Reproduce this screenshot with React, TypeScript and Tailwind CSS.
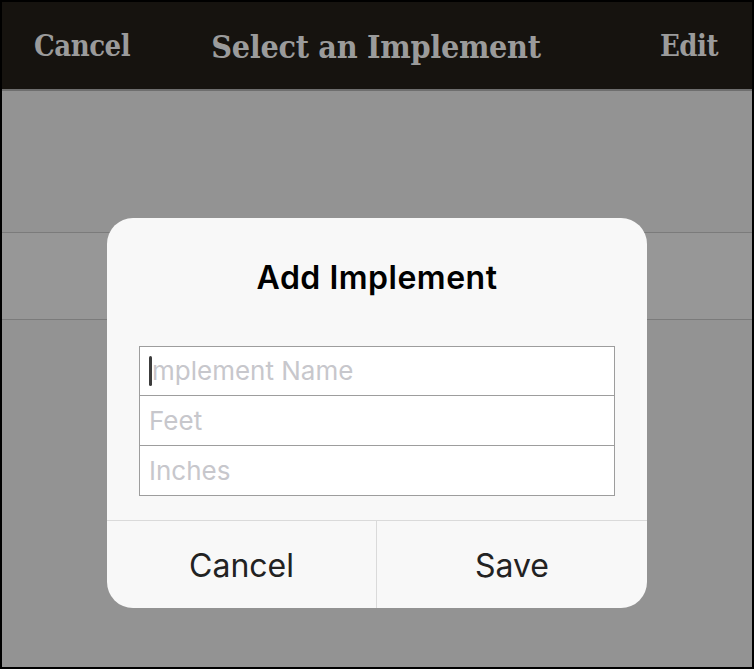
import React from "react";

export default function App() {
  const sans = { fontFamily: "Inter, 'Liberation Sans', Arial, sans-serif" };
  return (
    <div className="relative w-[754px] h-[669px] border-2 border-black bg-[#939393] flex flex-col overflow-hidden">
      <div
        className="h-[89px] shrink-0 bg-[#16130f] border-b-2 border-[#6e6e6e] grid grid-cols-[1fr_auto_1fr] items-center pl-[32px] pr-[34px] pt-[3px] text-[#9b9b9b] font-bold"
        style={{ fontFamily: "'DejaVu Serif', 'Liberation Serif', serif" }}
      >
        <span className="text-[29px] font-stretch-condensed tracking-[-0.5px]">Cancel</span>
        <span className="text-[32px] font-stretch-condensed tracking-[-0.3px]">Select an Implement</span>
        <span className="text-[29px] font-stretch-condensed tracking-[-0.5px] justify-self-end">Edit</span>
      </div>
      <div className="h-[142px] shrink-0 border-b border-[#7b7b7b]" />
      <div className="h-[87px] shrink-0 bg-[#979797] border-b border-[#7b7b7b]" />
      <div className="flex-1" />

      <div
        className="absolute left-[105px] top-[216px] w-[540px] h-[390px] rounded-[26px] bg-[#f8f8f8] flex flex-col overflow-hidden"
        style={sans}
      >
        <div className="h-[128px] shrink-0 pt-[40px]">
          <div className="h-[40px] leading-[40px] text-center text-[32px] tracking-[0.5px] font-semibold text-black">
            Add Implement
          </div>
        </div>
        <div className="mx-[32px] h-[150px] shrink-0 flex flex-col border border-[#9d9d9d] bg-white">
          <div className="h-[49px] border-b border-[#9d9d9d] flex items-center pl-[9px]">
            <span className="w-[3px] h-[30px] rounded-full bg-[#3c3c3c]" />
            <span className="text-[26px] text-[#c7c7cc] leading-none">mplement Name</span>
          </div>
          <div className="h-[50px] border-b border-[#9d9d9d] flex items-center pl-[9px]">
            <span className="text-[26px] text-[#c7c7cc] leading-none">Feet</span>
          </div>
          <div className="flex-1 flex items-center pl-[9px]">
            <span className="text-[26px] text-[#c7c7cc] leading-none">Inches</span>
          </div>
        </div>
        <div className="h-[24px] shrink-0" />
        <div className="flex-1 border-t border-[#dadada] grid grid-cols-2">
          <div className="flex items-center justify-center pt-[2px] border-r border-[#dadada] text-[32px] text-[#222]">
            Cancel
          </div>
          <div className="flex items-center justify-center pt-[2px] text-[32px] text-[#222]">Save</div>
        </div>
      </div>
    </div>
  );
}
